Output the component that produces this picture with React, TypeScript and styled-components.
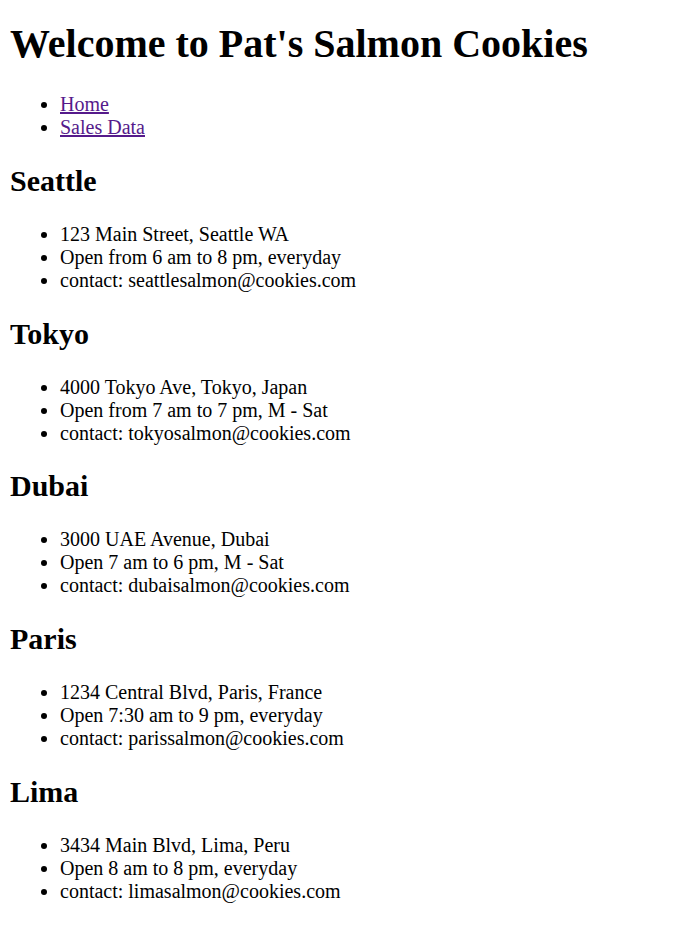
import styled, { createGlobalStyle } from "styled-components";

const GlobalStyle = createGlobalStyle`
  body {
    margin: 10px;
    font-family: "Liberation Serif", "Times New Roman", serif;
    font-size: 20px;
    color: #000000;
    background: #ffffff;
  }
`

const Title = styled.h1`
  font-size: 40px;
  margin: 10px 0 26px;
`

const CityName = styled.h2`
  font-size: 30px;
  margin: 24.9px 0;
`

const List = styled.ul`
  margin: 20px 0;
  padding-left: 50px;
`

const NavLink = styled.a`
  color: #551a8b;
`

const stores = [
  {
    name: "Seattle",
    lines: ["123 Main Street, Seattle WA", "Open from 6 am to 8 pm, everyday", "contact: seattlesalmon@cookies.com"],
  },
  {
    name: "Tokyo",
    lines: ["4000 Tokyo Ave, Tokyo, Japan", "Open from 7 am to 7 pm, M - Sat", "contact: tokyosalmon@cookies.com"],
  },
  {
    name: "Dubai",
    lines: ["3000 UAE Avenue, Dubai", "Open 7 am to 6 pm, M - Sat", "contact: dubaisalmon@cookies.com"],
  },
  {
    name: "Paris",
    lines: ["1234 Central Blvd, Paris, France", "Open 7:30 am to 9 pm, everyday", "contact: parissalmon@cookies.com"],
  },
  {
    name: "Lima",
    lines: ["3434 Main Blvd, Lima, Peru", "Open 8 am to 8 pm, everyday", "contact: limasalmon@cookies.com"],
  },
];

export default function App() {
  return (
    <>
      <GlobalStyle />
      <Title>Welcome to Pat's Salmon Cookies</Title>
      <List>
        <li><NavLink href="#">Home</NavLink></li>
        <li><NavLink href="#">Sales Data</NavLink></li>
      </List>
      {stores.map((store) => (
        <section key={store.name}>
          <CityName>{store.name}</CityName>
          <List>
            {store.lines.map((line) => (
              <li key={line}>{line}</li>
            ))}
          </List>
        </section>
      ))}
    </>
  );
}
